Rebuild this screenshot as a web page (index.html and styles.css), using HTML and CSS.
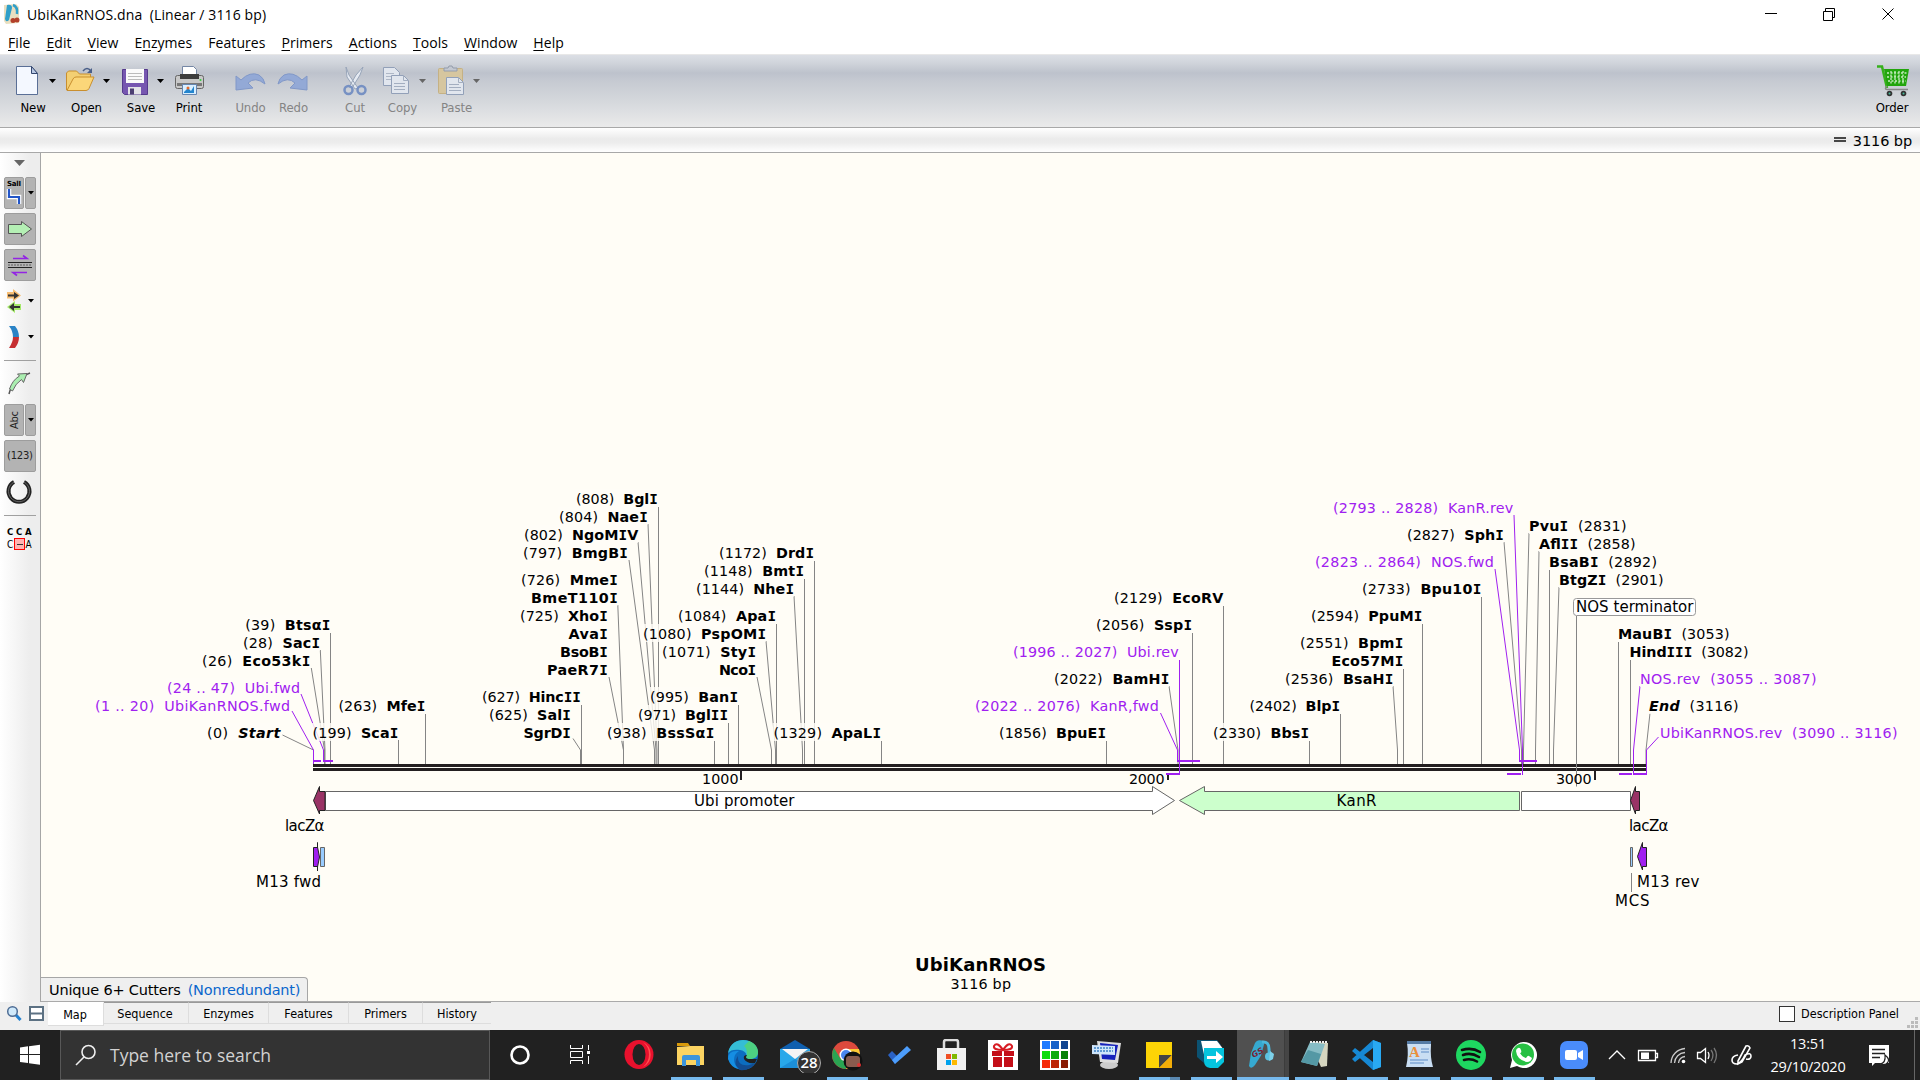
FILE: index.html
```html
<!DOCTYPE html>
<html lang="en">
<head>
<meta charset="utf-8">
<title>UbiKanRNOS.dna (Linear / 3116 bp)</title>
<link rel="stylesheet" href="styles.css">
</head>
<body>
<div class="app">
  <header class="titlebar">
    <svg class="app-icon" width="18" height="22" viewBox="0 0 18 22"><path d="M1 2 13 1l3 3v16l-13 1-2-3z" fill="#e9dfc0"/><path d="M4 2q5-1 5 3L6 17q-3 3-4-1z" fill="#2f9fc9"/><path d="M10 2q5 2 4 9" stroke="#2f9fc9" stroke-width="2.5" fill="none"/><circle cx="10" cy="17.500" r="2.500" fill="#b3402a"/><circle cx="14" cy="17" r="2.500" fill="#b3402a"/></svg>
    <span class="title">UbiKanRNOS.dna&nbsp; (Linear / 3116 bp)</span>
    <svg class="win-controls" width="140" height="20" viewBox="1760 4 140 20" fill="none" stroke="#000"><path d="M1765 13.500h12M1823.500 11.500h9v9h-9zM1825.500 11v-2.500h9v9h-2M1882.500 8.500l11 11M1893.500 8.500l-11 11"/></svg>
  </header>
  <nav class="menubar">
    <span><u>F</u>ile</span><span><u>E</u>dit</span><span><u>V</u>iew</span><span>E<u>n</u>zymes</span><span>Featu<u>r</u>es</span><span><u>P</u>rimers</span><span><u>A</u>ctions</span><span><u>T</u>ools</span><span><u>W</u>indow</span><span><u>H</u>elp</span>
  </nav>
  <div class="toolbar">
    <div class="tool"><svg width="50" height="36" viewBox="8 62 50 36"><path d="M16.500 66.500h15l6 7v21h-21z" fill="#f4f8ff" stroke="#5a6f96"/><path d="M31.500 66.500v7h6z" fill="#b9c9e4" stroke="#33466e"/><path d="M49 79h7l-3.500 4z"/></svg><span>New</span></div>
    <div class="tool"><svg width="57" height="36" viewBox="58 62 57 36"><path d="M66.500 90V73l2-2h8l3 3h11v6" fill="#f3cf73" stroke="#c98f2f"/><path d="M67 90.500 73 79q1-2 3-2h18l-5 11.500q-1 2-3 2z" fill="#fbd679" stroke="#c98f2f"/><path d="M83 71q4-5 8 0" fill="none" stroke="#4a5f88" stroke-width="1.500"/><path d="M92 68v5h-5z" fill="#4a5f88"/><path d="M103 79h7l-3.500 4z"/></svg><span>Open</span></div>
    <div class="tool"><svg width="52" height="36" viewBox="115 62 52 36"><path d="M122.500 69.500h25v25h-23l-2-2z" fill="#7656b0" stroke="#553a8d"/><path d="M126 69h18v14h-18z" fill="#fafafa"/><path d="M128 73.500h14M128 76.500h14M128 79.500h14" stroke="#bbb"/><path d="M128 87h13v7.500h-13z" fill="#e4e4e8"/><path d="M130 88.500h4v6h-4z" fill="#4c3f72"/><path d="M157 79h7l-3.500 4z"/></svg><span>Save</span></div>
    <div class="tool"><svg width="44" height="36" viewBox="167 62 44 36"><path d="M182.500 66.500h11l3 3v8h-14z" fill="#fff" stroke="#7587a5"/><rect x="175.500" y="75.500" width="28" height="13" rx="2" fill="#c8c8c8" stroke="#666"/><path d="M180 74h19v5h-19z" fill="#3d3d3d"/><path d="M177 83h25v3h-25z" fill="#777"/><path d="M182.500 84.500h14v10h-14z" fill="#d9efff" stroke="#6585b0"/><path d="m184 92 4-4 3 3 3-5v7h-10z" fill="#2385ce"/><circle cx="188" cy="88" r="1.500" fill="#e46b2c"/><circle cx="200.500" cy="80" r="1" fill="#2ed13c"/></svg><span>Print</span></div>
    <div class="tool disabled gap-undo"><svg width="41" height="36" viewBox="230 62 41 36"><path d="m236 76 5 4q9-9 18-5 5 3 6 9-10-8-17-1l5 5-17 2z" fill="#93a9d6" stroke="#8198c8"/></svg><span>Undo</span></div>
    <div class="tool disabled gap-redo"><svg width="41" height="36" viewBox="273 62 41 36"><path d="m307 76-5 4q-9-9-18-5-5 3-6 9 10-8 17-1l-5 5 17 2z" fill="#93a9d6" stroke="#8198c8"/></svg><span>Redo</span></div>
    <div class="tool disabled gap-cut"><svg width="40" height="36" viewBox="335 62 40 36"><path d="m346 67 3 8 9 13-3 1-8-12zM363 67l-3 8-8 13-3-1 7-12z" fill="#e5eaf2" stroke="#98a5b9"/><circle cx="348.500" cy="90" r="4" fill="none" stroke="#7791c3" stroke-width="2.500"/><circle cx="361.500" cy="90" r="4" fill="none" stroke="#7791c3" stroke-width="2.500"/></svg><span>Cut</span></div>
    <div class="tool disabled"><svg width="55" height="36" viewBox="375 62 55 36"><path d="M383.500 67.500h11l5 5v13h-16z" fill="#e1e6ee" stroke="#92a0b8"/><path d="M386 73.500h8M386 76.500h8M386 79.500h8" stroke="#aeb7c6"/><path d="M391.500 75.500h12l5 5v13h-17z" fill="#e1e6ee" stroke="#92a0b8"/><path d="M403.500 75.500v5h5M394 83.500h11M394 86.500h11M394 89.500h11" fill="none" stroke="#a3aec0"/><path d="M419 79h7l-3.500 4z" fill="#666"/></svg><span>Copy</span></div>
    <div class="tool disabled"><svg width="53" height="36" viewBox="430 62 53 36"><rect x="438.500" y="68.500" width="24" height="25" rx="1" fill="#d6c69f" stroke="#c5b184"/><path d="M444 71v-3h4l1-2h3l1 2h4v3z" fill="#c3c8d1" stroke="#939cab"/><path d="M446.500 77.500h12l5 5v12h-17z" fill="#e1e6ee" stroke="#92a0b8"/><path d="M458.500 77.500v5h5M449 84.500h10M449 87.500h12M449 90.500h12" fill="none" stroke="#a3aec0"/><path d="M473 79h7l-3.500 4z" fill="#666"/></svg><span>Paste</span></div>
    <div class="tool order"><svg width="40" height="36" viewBox="1872 62 40 36"><path d="M1877 66.500h5l5 21.500" fill="none" stroke="#36b11b" stroke-width="2.500"/><path d="M1884 69h25l-3 17h-19z" fill="#22a50c"/><path d="M1887 73h20M1887 77h19M1888 81h18M1891 71v13M1895 71v13M1899 71v13M1903 71v13" stroke="#c8ecc0" stroke-width="1.300" stroke-dasharray="2 1.500"/><path d="M1887 86q-3 3 0 3.500h21" fill="none" stroke="#888" stroke-width="1.500"/><circle cx="1889.500" cy="93.500" r="2.800" fill="#333"/><circle cx="1903.500" cy="93.500" r="2.800" fill="#333"/><circle cx="1889.500" cy="93.500" r="1" fill="#4b9"/><circle cx="1903.500" cy="93.500" r="1" fill="#4b9"/></svg><span>Order</span></div>
  </div>
  <div class="infobar"><svg width="12" height="6" viewBox="0 0 12 6"><path d="M0 1h12M0 4h12" stroke="#111" stroke-width="1.600"/></svg><span>3116 bp</span></div>
  <main class="workspace">
    <aside class="sidebar">
      <svg width="36" height="16" viewBox="0 0 36 16"><path d="M14 3h11l-5.500 6z" fill="#666"/></svg>
      <svg width="32" height="32" viewBox="4 177 32 32"><rect class="pressed" x="4.500" y="177.500" width="19" height="31" rx="1.500"/><rect class="pressed" x="25.500" y="177.500" width="10" height="31" rx="1.500"/><text class="sal" x="7" y="186" textLength="14">SalI</text><path d="M9 189v8h10v7" stroke="#fff" stroke-width="4.500" fill="none"/><path d="M9 189v8h10v7" stroke="#2356c8" stroke-width="2.200" fill="none"/><path d="M28 191h6l-3 3.500z"/></svg>
      <svg width="32" height="32" viewBox="4 213 32 32"><rect class="pressed" x="4.500" y="213.500" width="31" height="31" rx="1.500"/><path d="M8.500 224.500h13v-3l10 7.500-10 7.500v-3h-13z" fill="#b4efb4" stroke="#555"/></svg>
      <svg width="32" height="32" viewBox="4 249 32 32"><rect class="pressed" x="4.500" y="249.500" width="31" height="31" rx="1.500"/><path d="M8 262.500h24M8 267.500h24" stroke="#222"/><path d="M8 265h24" stroke="#888" stroke-width="2" stroke-dasharray="2 1"/><path d="M13 258.500h14l-4-3M27 272.500H13l4 3" fill="none" stroke="#9324e4" stroke-width="1.600"/></svg>
      <svg width="32" height="32" viewBox="4 285 32 32"><path d="M7 292h6v-3l8 6.500-8 6v-3H7z" fill="#f7bd73"/><path d="M21 304h-6v-3l-8 6 8 6v-3h6z" fill="#a5e96b"/><path d="M8 295.500h8M20 307h-8" stroke="#333" stroke-width="2"/><path d="m14 292 5 3.500-5 3.500zM14 303l-5 4 5 4z" fill="#333"/><path d="M28 299h6l-3 3.500z"/></svg>
      <svg width="32" height="32" viewBox="4 321 32 32"><path d="M9 326h6q4 5 4 11h-6q0-6-4-11z" fill="#2a83c6"/><path d="M19 337q0 6-4 11H9q4-6 4-11z" fill="#c62f32"/><path d="M28 335h6l-3 3.500z"/></svg>
      <div class="rule"></div>
      <svg width="32" height="32" viewBox="4 368 32 32"><path d="M9 394q3-14 21-21" fill="none" stroke="#555" stroke-width="1.500"/><path d="M9.500 389q3-9 10-13l-2-2 9.500-.5-3.500 9-2-3q-6 4-9 11.500z" fill="#aaeeb0" stroke="#666"/></svg>
      <svg width="32" height="32" viewBox="4 404 32 32"><rect class="pressed" x="4.500" y="404.500" width="19" height="31" rx="1.500"/><rect class="pressed" x="25.500" y="404.500" width="10" height="31" rx="1.500"/><text class="small-label" transform="translate(18 429) rotate(-90)" textLength="18">Abc</text><path d="M28 418h6l-3 3.500z"/></svg>
      <svg width="32" height="32" viewBox="4 440 32 32"><rect class="pressed" x="4.500" y="440.500" width="31" height="31" rx="1.500"/><text class="small-label" x="7" y="458.500" textLength="26">(123)</text></svg>
      <svg width="32" height="32" viewBox="4 476 32 32"><path d="M14 482a10.500 10.500 0 1 0 10 0" fill="none" stroke="#222" stroke-width="4"/><path d="M14 482a10.500 10.500 0 1 0 10 0" fill="none" stroke="#777" stroke-width=".8"/></svg>
      <div class="rule"></div>
      <svg width="32" height="32" viewBox="4 521 32 32"><text class="cca bold" x="7" y="532.500">C</text><text class="cca bold" x="16" y="532.500">C</text><text class="cca bold" x="25" y="532.500">A</text><rect x="14.500" y="536.500" width="10" height="11" fill="#ffb3b3" stroke="#f00"/><text class="cca" x="7" y="546">C</text><text class="cca" x="25.500" y="546">A</text><path d="M17 542.500h6" stroke="#333"/></svg>
    </aside>
    <section class="canvas">
      <svg id="map" class="map" width="1879" height="848" viewBox="41 153 1879 848"></svg>
      <div class="cutters"><span class="set">Unique 6+ Cutters</span><span class="mode">(Nonredundant)</span></div>
    </section>
  </main>
  <footer class="viewbar">
    <svg class="view-icons" width="48" height="28" viewBox="0 1002 48 28"><path d="m15.500 1014.500 5 5.500" stroke="#2280d0" stroke-width="3"/><circle cx="12.500" cy="1011.500" r="4.800" fill="#cfe9fb" stroke="#4d6c94" stroke-width="1.500"/><path d="M30 1007h13v13h-13z" fill="#fff" stroke="#5c7183" stroke-width="2"/><path d="M30 1013.500h13" stroke="#5c7183" stroke-width="2"/></svg>
    <div class="tabs"><span class="tab active">Map</span><span class="tab t-seq">Sequence</span><span class="tab t-enz">Enzymes</span><span class="tab t-fea">Features</span><span class="tab t-pri">Primers</span><span class="tab t-his">History</span></div>
    <label class="desc"><i class="box"></i><span>Description Panel</span></label>
    <svg class="grip" width="12" height="12" viewBox="0 0 12 12" fill="#bbb"><path d="M8 0h3v3H8zM4 4h3v3H4zM8 4h3v3H8zM0 8h3v3H0zM4 8h3v3H4zM8 8h3v3H8z"/></svg>
  </footer>
</div>
<div class="taskbar">
  <div class="start"><svg width="22" height="22" viewBox="0 0 22 22" fill="#fff"><path d="m1 3.500 8-1.200V10H1zM10 2.200 21 .7V10H10zM1 11h8v8L1 17.900zM10 11h11v9.700l-11-1.500z"/></svg></div>
  <div class="search"><svg width="22" height="22" viewBox="0 0 22 22" fill="none" stroke="#eee" stroke-width="1.600"><circle cx="13.500" cy="8" r="6.500"/><path d="M9 13 1 21"/></svg><span>Type here to search</span></div>
  <div class="sys"><svg width="32" height="32" viewBox="0 0 32 32"><circle cx="16" cy="16" r="8.500" fill="none" stroke="#fff" stroke-width="2.600"/></svg></div>
  <div class="sys"><svg width="32" height="32" viewBox="0 0 32 32" fill="none" stroke="#fff"><path d="M6.500 6v3.500h12V6M6.500 25v-3.500h12V25M6.500 12.500h12v6h-12zM24.500 6v5M24.500 17v8"/><path d="M23 12h3v3h-3z" fill="#fff" stroke="none"/></svg></div>
  <div class="apps">
    <div class="cell"><svg width="32" height="32" viewBox="0 0 32 32"><ellipse cx="16" cy="15.500" rx="14.500" ry="14.500" fill="#e8112d"/><path d="M20 3a14 14 0 0 1 0 25q6-5 6-12.500T20 3z" fill="#ff5050"/><ellipse cx="16" cy="15.500" rx="6.500" ry="10.500" fill="#222"/></svg></div>
    <div class="cell open"><svg width="32" height="32" viewBox="0 0 32 32"><path d="M2 4h11l2 3H2z" fill="#d99a0b"/><path d="M2 8 15 7h14v19H2z" fill="#fcd462"/><path d="M7 27V18q0-2 2-2h14q2 0 2 2v9h-4v-6H11v6z" fill="#3d95dc"/></svg></div>
    <div class="cell open"><svg width="32" height="32" viewBox="0 0 32 32"><circle cx="16" cy="16" r="15" fill="#0c6dc0"/><path d="M1 14C3 4 10 1 16 1c9 0 15 6 15 12 0 5-4 7-8 7-3 0-4-1-4-2 1-1 1-6-6-7C8 10 3 11 1 14z" fill="#35bdd6"/><path d="M22 2c6 2 9 7 9 11 0 5-4 7-8 7-3 0-4-1-4-2 1-1 2-8-2-11z" fill="#56d764" opacity=".75"/><path d="M11 19c0 6 6 10 17 5-3 5-9 8-15 7-5-3-6-9-2-14z" fill="#124d93"/><path d="M12 12q-5 3-5 9 0 5 5 9-8-1-11-10 0-9 11-8z" fill="#158ee3"/><path d="M19 18q0 2 4 2h7l-2 4q-8 1-11-4-1-4 3-4z" fill="#202020"/></svg></div>
    <div class="cell mail"><svg width="42" height="36" viewBox="0 0 42 36"><path d="M1 12 16 3l15 9v19H1z" fill="#0f5fae"/><path d="M1 12h30v19H1z" fill="#28a8ea"/><path d="M3 12h26L16 22z" fill="#f5f5f5"/><path d="m1 31 15-9 15 9z" fill="#1c8fd8"/><circle cx="30" cy="26" r="11.500" fill="#333" stroke="#aaa"/><text class="badge" x="30" y="31" text-anchor="middle">28</text></svg></div>
    <div class="cell open"><svg width="32" height="32" viewBox="0 0 32 32"><circle cx="15" cy="16" r="14" fill="#dc4a3d"/><path d="M15 30A14 14 0 0 1 3 9l6 10 6 4z" fill="#2aa452"/><path d="M28 10H15l7 9-7 11q14-2 14-15z" fill="#fcc934"/><circle cx="15" cy="16" r="6.500" fill="#fff"/><circle cx="15" cy="16" r="5" fill="#4a86ed"/><circle cx="22" cy="22" r="9.500" fill="#111"/><rect x="15" y="17" width="14" height="11" rx="3" fill="#895b4e"/><circle cx="28" cy="26" r="2" fill="#d33"/></svg></div>
    <div class="cell"><svg width="32" height="32" viewBox="0 0 32 32"><path d="m5 16 4-4 6 6-3 7z" fill="#2a62c5"/><path d="m12 25-3-4L24 7l4 4z" fill="#4c9dfc"/></svg></div>
    <div class="cell"><svg width="32" height="32" viewBox="0 0 32 32"><path d="M9 10V3q0-2 2-2h10q2 0 2 2v7" fill="none" stroke="#ddd" stroke-width="2.500"/><path d="M2 9h29v22H2z" fill="#f1f1f1"/><path d="M11 15h5v5h-5z" fill="#f04e23"/><path d="M17 15h5v5h-5z" fill="#80b900"/><path d="M11 21h5v5h-5z" fill="#00a2ed"/><path d="M17 21h5v5h-5z" fill="#fdb900"/></svg></div>
    <div class="cell"><svg width="32" height="32" viewBox="0 0 32 32"><path d="M1 1h30v30H1z" fill="#fff"/><path d="M5 12h10v5H5zM17 12h10v5H17zM6 18h9v10H6zM17 18h9v10h-9z" fill="#c40e18"/><path d="M16 11q-10 0-9-4 3-5 9 4 6-9 9-4 1 4-9 4z" fill="none" stroke="#d71c24" stroke-width="2"/></svg></div>
    <div class="cell"><svg width="32" height="32" viewBox="0 0 32 32"><path d="M1 1h30v30H1z" fill="#fff"/><path d="M3 2h8v8H3z" fill="#1f7aff"/><path d="M12 2h8v8h-8z" fill="#1560c8"/><path d="M22 2h7v8h-7z" fill="#104490"/><path d="M3 12h8v8H3z" fill="#0bdc0b"/><path d="M12 12h8v8h-8z" fill="#0bab0b"/><path d="M22 12h7v8h-7z" fill="#078007"/><path d="M3 21h8v8H3z" fill="#f52c0a"/><path d="M12 21h8v8h-8z" fill="#bb2406"/><path d="M22 21h7v8h-7z" fill="#8a1b04"/></svg></div>
    <div class="cell"><svg width="32" height="32" viewBox="0 0 32 32"><ellipse cx="18" cy="26" rx="9" ry="4" fill="#ccc"/><path d="m6 2 24 2-3 20-18-1z" fill="#ddd"/><path d="m9 4 18 2-3 15-13-1z" fill="#1621bb"/><path d="m1 6 23 1v9L1 15z" fill="#cfe5fb"/><path d="M3 9h19M3 12h19" stroke="#3d80c4" stroke-width="1.500" stroke-dasharray="2 1"/></svg></div>
    <div class="cell open stacked"><svg width="32" height="32" viewBox="0 0 32 32"><path d="M3 3h26v26H3z" fill="#fdd406"/><path d="M16 16h13L16 29z" fill="#444"/><path d="M29 16v13H16z" fill="#f3ad08"/></svg></div>
    <div class="cell open"><svg width="32" height="32" viewBox="0 0 32 32"><path d="M2 1h20l4 5-17 2v16L2 18z" fill="#0b5272"/><path d="M6 2h16l7 9v9H10z" fill="#fff"/><path d="M9 9h20v14l-6 6H15q-6-1-6-7z" fill="#05c4de"/><path d="M12 17h9v-5l7 6-7 6v-4h-9z" fill="#fff"/></svg></div>
    <div class="cell open current"><svg width="32" height="32" viewBox="0 0 32 32"><path d="M11 1.500q6-1 6 4l-3 11L8 26q-4 5-6 1L4 14 8 4q1-2 3-2.500z" fill="#36a9d0"/><path d="M15 3q7-1 7 7 0 4 1 6" fill="none" stroke="#4bb8dc" stroke-width="3"/><circle cx="22" cy="17.500" r="4" fill="#5cc2e2"/><path d="m23 12 4 3-1 5-4 2z" fill="#7dd1ea"/><text class="gs" transform="translate(6.500 19) rotate(-30)">GS</text></svg></div>
    <div class="cell open"><svg width="32" height="32" viewBox="0 0 32 32"><path d="m11 3 18 1-1 23-6 1z" fill="#d6d6c0"/><path d="m11 3 15 2-8 22-16-4z" fill="#86bcc5"/><path d="m9 11 13 4-4 12-16-4z" fill="#5498a5"/><path d="M11 3h17" stroke="#eee" stroke-dasharray="2 1" stroke-width="2"/></svg></div>
    <div class="cell open"><svg width="32" height="32" viewBox="0 0 32 32"><path d="m22 1 8 3v24l-8 3L1 12l3-3 18 14V9L4 23l-3-3z" fill="#1688d4"/><path d="m22 1 8 3v24l-8 3z" fill="#29a9f2"/></svg></div>
    <div class="cell open"><svg width="32" height="32" viewBox="0 0 32 32"><path d="M4 2h24v4q-1 12 2 22H3q3-12 1-24z" fill="#c9def3"/><path d="M4 2h24v3H4z" fill="#557ba5"/><path d="M18 10h8M18 13h8M7 21h18M7 24h14" stroke="#5c8bc6"/><text class="wp" x="6" y="18">A</text></svg></div>
    <div class="cell open"><svg width="32" height="32" viewBox="0 0 32 32"><circle cx="16" cy="16" r="15" fill="#1ed760"/><path d="M7 11q10-3 18 2M8 16q8-3 16 2M9 21q7-2 13 1.500" fill="none" stroke="#111" stroke-width="2.600" stroke-linecap="round"/></svg></div>
    <div class="cell narrow open"><svg width="32" height="32" viewBox="0 0 32 32"><path d="m3 29 2-8A13 13 0 1 1 10 27z" fill="#fff"/><circle cx="16" cy="15.500" r="11" fill="#27c043"/><path d="M11 9q2-1 3 2t-1 3q2 4 6 5 2-3 3-2l3 2q-1 4-5 4-10-2-11-11 0-2 2-3z" fill="#fff"/></svg></div>
    <div class="cell narrow open"><svg width="32" height="32" viewBox="0 0 32 32"><rect x="2" y="2" width="28" height="28" rx="7" fill="#4a8cfb"/><rect x="7" y="11" width="12" height="10" rx="2" fill="#fff"/><path d="m20 14 5-3v10l-5-3z" fill="#fff"/></svg></div>
  </div>
  <svg class="tray" width="160" height="50" viewBox="1599 1030 160 50" fill="none" stroke="#fff" stroke-width="1.300"><path d="m1609 1059 8-8 8 8"/><path d="M1638.500 1050.500h17v10h-17zM1656 1053.500h1.500v4h-1.500"/><path d="M1641 1052.500h8v6.500h-8z" fill="#fff" stroke="none"/><path d="M1671 1063a15 15 0 0 1 14-14.500M1674.500 1063a11 11 0 0 1 10.500-10.500M1678.500 1063a7.500 7.500 0 0 1 6.500-6.500" stroke="#ccc"/><circle cx="1683.500" cy="1061.500" r="1.800" fill="#fff" stroke="none"/><path d="M1697.500 1052.500h3l5-4v14l-5-4h-3z"/><path d="M1708 1052q2 3 0 7"/><path d="M1711 1050q4 5 0 11M1714 1048q5 7 0 15" stroke="#777"/><path d="m1738 1061 8-15q3-1 4 2l-8 14-4 2zM1738 1055q-6 1-6 5t5 4q5-2 8-9 6-3 6 1t-5 3" stroke-width="1.600"/></svg>
  <div class="clock"><span>13:51</span><span>29/10/2020</span></div>
  <svg class="notif" width="66" height="50" viewBox="1853 1030 66 50"><path d="M1869 1045h20v18h-14l-3 3v-3h-3z" fill="#fff"/><path d="M1872 1049.500h13M1872 1053.500h13M1872 1057.500h8" stroke="#222" stroke-width="1.300"/><path d="M1885 1055q5 4 3 7-2 4-8 2 6-1 5-9z" fill="#fff" stroke="#222" stroke-width="1.200"/><path d="M1914.500 1030v50" stroke="#666"/></svg>
</div>
<script src="map.js"></script>
</body>
</html>
```
FILE: styles.css
```css
* { box-sizing: border-box; }
body { margin: 0; width: 1920px; height: 1080px; overflow: hidden; display: flex; flex-direction: column; background: #fff; color: #000; font-family: "Open Sans", "Noto Sans", sans-serif; }
svg { display: block; flex: none; }
.app { height: 1030px; display: flex; flex-direction: column; }

.titlebar { height: 28px; display: flex; align-items: center; padding: 0 20px 0 3px; }
.title { margin-left: 6px; font-size: 14px; letter-spacing: .12px; white-space: pre; }
.win-controls { margin-left: auto; }
.menubar { height: 26px; display: flex; gap: 16px; padding: 5px 0 0 8px; font-size: 14px; line-height: 19px; letter-spacing: .06px; }
.menubar u { text-underline-offset: 2px; text-decoration-thickness: 1px; }

.toolbar { height: 74px; display: flex; padding: 7px 8px 0; border-top: 1px solid #e8e8e8; border-bottom: 1px solid #a8a8a8; background: linear-gradient(#dcdfe5 0, #d0d4db 8px, #bdc2cc 18px, #c6cad2 26px, #d6d9dd 48px, #ebebeb 73px); }
.tool { display: flex; flex-direction: column; align-items: center; font: 13px/18px "DejaVu Sans Condensed", "Open Sans", sans-serif; }
.tool span { margin-top: 1px; letter-spacing: -.1px; }
.disabled { color: #848484; }
.gap-undo { margin-left: 19px; }
.gap-redo { margin-left: 2px; }
.gap-cut { margin-left: 21px; }
.order { margin-left: auto; }

.infobar { height: 25px; display: flex; justify-content: flex-end; align-items: center; gap: 7px; padding: 2px 8px 0 0; border-bottom: 1px solid #a8a8a8; background: linear-gradient(#fff, #ebebeb 45%, #ececec 60%, #fff); font: 14.5px/22px "DejaVu Sans", sans-serif; letter-spacing: -.1px; }
.infobar svg { margin-bottom: 2px; }

.workspace { height: 849px; display: flex; }
.sidebar { width: 41px; display: flex; flex-direction: column; align-items: flex-start; gap: 4px; padding: 4px 0 0 4px; border-right: 1px solid #a6a6a6; background: linear-gradient(90deg, #fff, #ededed 75%); }
.sidebar > svg:first-child { margin-left: -4px; }
.rule { width: 32px; height: 1px; margin: 3px 0; background: #a0a0a0; }
.pressed { fill: #b3b3b3; stroke: #9d9d9d; }
.sal { font: bold 7px "DejaVu Sans", sans-serif; }
.small-label { font: 10px "DejaVu Sans", sans-serif; fill: #222; }
.cca { font: 10px "DejaVu Sans Condensed", "DejaVu Sans", sans-serif; }
.cca.bold { font-weight: bold; font-size: 9.5px; }

.canvas { position: relative; flex: 1; background: #fffdf6; border-bottom: 1px solid #aaa; }
.cutters { position: absolute; left: 0; bottom: 0; width: 267px; height: 24px; display: flex; align-items: center; gap: 7px; padding: 1px 0 0 8px; border: 1px solid #a6a6a6; border-width: 1px 1px 0 0; border-radius: 0 4px 0 0; background: #efefef; font: 14.5px/20px "DejaVu Sans", sans-serif; letter-spacing: -.19px; white-space: nowrap; }
.mode { color: #0a66cc; }

.lead { fill: none; stroke: #858585; stroke-width: 1; }
.lead.primer { stroke: #a020f0; }
.site { stroke: #a020f0; stroke-width: 2; }
.strand { fill: #231f20; }
.tick { stroke: #231f20; stroke-width: 2; }
.mask { fill: #fffdf6; opacity: .82; }
.lbl { font: 14.3px "DejaVu Sans", sans-serif; fill: #000; }
.lbl .name { font-weight: bold; }
.lbl .end { font-style: italic; }
.lbl .slab { font-family: "DejaVu Sans Mono", monospace; }
.lbl.primer { fill: #a020f0; }
.lbl.feature { font-size: 15px; }
.lbl.heading { font-size: 18px; font-weight: bold; }
.callout { fill: #fff; stroke: #999; }
.shape { stroke: #666; }
.shape.dark { stroke: #222; }
.white { fill: #fff; }
.green { fill: #cfc; }
.plum { fill: #936; }
.violet { fill: #a020f0; }
.sky { fill: #99ccff; }

.viewbar { height: 28px; display: flex; align-items: flex-start; background: #efefef; font: 12.5px/16px "DejaVu Sans Condensed", "Open Sans", sans-serif; }
.tabs { display: flex; }
.tab { height: 22px; padding-top: 3px; text-align: center; border: solid #ddd; border-width: 0 1px 1px 0; border-top: 1px solid #999; }
.tab.active { width: 56px; height: 24px; padding: 4px 1px 0 0; background: #fff; border-color: #fff #ddd #ddd #fff; }
.t-seq { width: 85px; padding-right: 2px; } .t-enz { width: 80px; } .t-fea { width: 80px; } .t-pri { width: 74px; } .t-his { width: 68px; border-right: 0; }
.desc { margin: 4px 0 0 auto; display: flex; align-items: center; gap: 6px; height: 16px; }
.box { width: 16px; height: 16px; border: 1px solid #333; background: #fff; }
.grip { margin: 15px 1px 0 8px; }

.taskbar { height: 50px; display: flex; background: #212121; color: #fff; }
.start { width: 60px; display: flex; align-items: center; justify-content: center; }
.search { width: 430px; display: flex; align-items: center; gap: 13px; padding-left: 14px; border: 1px solid #585858; background: #333; color: #d2d2d2; font-size: 17.500px; }
.sys { width: 60px; display: flex; align-items: center; justify-content: center; }
.apps { display: flex; padding-left: 3px; }
.cell { position: relative; width: 52px; display: flex; align-items: center; justify-content: center; }
.cell.narrow { width: 51px; }
.cell.open::after { content: ""; position: absolute; left: 5.500px; bottom: 0; width: 41px; height: 3px; background: #76b9ed; }
.cell.stacked::after { background: linear-gradient(90deg, #76b9ed 75%, #5a88b0 75%); }
.cell.current { background: linear-gradient(90deg, #505050 47px, #333 47px, #454545 48px); }
.cell.current::after { left: 0; width: 52px; }
.cell.mail svg { margin-left: 9px; }
.badge { font: 600 15px "Open Sans", sans-serif; fill: #fff; }
.gs { font: italic bold 8px "DejaVu Sans", sans-serif; fill: #7a2030; }
.wp { font: bold 15px "Liberation Serif", serif; fill: #e98f3c; }
.clock { width: 90px; padding-top: 2px; margin-left: 4px; display: flex; flex-direction: column; align-items: center; font-size: 14.500px; line-height: 23px; letter-spacing: -.2px; }
```
FILE: map.js
```js
const NS = "http://www.w3.org/2000/svg";
const map = document.getElementById("map");

function add(tag, attrs, text, parent = map) {
  const el = document.createElementNS(NS, tag);
  for (const k in attrs) el.setAttribute(k, attrs[k]);
  if (text) el.textContent = text;
  parent.appendChild(el);
  return el;
}

/* Leader lines: [x, y] is a straight drop, [x, y, x2, end] bends at y = 750. */
const leads = [
  [330.5, 633], [320.3, 650, 325], [311.3, 668, 324.5], [282.5, 735, 313.5], [398.5, 740], [425.5, 714],
  [658.5, 507], [648, 524, 657], [638, 542, 656], [629, 560, 654.5], [617.8, 605, 623.5], [609, 677, 623.5],
  [581.5, 705], [573, 738.5, 580.5], [714.5, 741], [728.5, 723], [738.5, 705], [757, 677, 771.5],
  [766, 641, 775.5], [776.5, 624], [794, 596, 802.5], [804.5, 579], [814.5, 561], [881.5, 741],
  [1223.5, 606], [1192.5, 633], [1169, 686, 1178], [1106.5, 741], [1309.5, 741], [1340.5, 714],
  [1393, 686, 1397.5], [1403.5, 669], [1422.5, 624], [1481.5, 597], [1504, 542, 1521.5], [1529, 533, 1523.5],
  [1539, 551, 1535.5], [1549.5, 570], [1559, 587, 1553.5], [1618.5, 642], [1630.5, 660], [1650, 713, 1646]
];
const primerLeads = [
  [301, 694, 323.5, 761], [292, 711, 313.5, 764], [1179.5, 660, 1179.5, 774], [1160.5, 713, 1177.5, 761],
  [1495, 569, 1519.5, 761], [1514, 515, 1522.5, 775], [1640, 686, 1633.5, 774], [1658.5, 737, 1646.5, 774]
];
const sites = [
  [313, 321, 761], [323, 333, 761], [1177, 1200, 761], [1166, 1180, 774], [1519, 1537, 761],
  [1507, 1521, 774], [1619, 1632, 774], [1633, 1647, 774]
];

/* Labels: [left, right, baseline, position, name]; primers carry a sixth value. */
const before = [
  [245.3, 330, 630, "(39)", "BtsαI"], [243, 319.7, 648, "(28)", "SacI"], [202, 310, 666, "(26)", "Eco53kI"],
  [167, 299.7, 693, "(24 .. 47)", "Ubi.fwd", 1], [95, 289.7, 711, "(1 .. 20)", "UbiKanRNOS.fwd", 1],
  [207, 280, 738, "(0)", "Start"], [312.5, 398, 738, "(199)", "ScaI"], [338.5, 425, 711, "(263)", "MfeI"],
  [576, 657.5, 504, "(808)", "BglI"], [559, 647.5, 522, "(804)", "NaeI"], [524, 638, 540, "(802)", "NgoMIV"],
  [523, 627.5, 558, "(797)", "BmgBI"], [521, 617.5, 585, "(726)", "MmeI"], [531, 617.5, 603, "", "BmeT110I"],
  [520, 607.5, 621, "(725)", "XhoI"], [568.5, 607.5, 639, "", "AvaI"], [560, 607.5, 657, "", "BsoBI"],
  [547, 607.5, 675, "", "PaeR7I"], [482, 580.5, 702, "(627)", "HincII"], [489, 570.5, 720, "(625)", "SalI"],
  [523.5, 570.5, 738, "", "SgrDI"], [607, 714, 738, "(938)", "BssSαI"], [638, 727.7, 720, "(971)", "BglII"],
  [650, 737.7, 702, "(995)", "BanI"], [719, 755.7, 675, "", "NcoI"], [662, 755.7, 657, "(1071)", "StyI"],
  [643, 765.7, 639, "(1080)", "PspOMI"], [678, 775.7, 621, "(1084)", "ApaI"], [696, 793.7, 594, "(1144)", "NheI"],
  [704, 803.7, 576, "(1148)", "BmtI"], [719, 813.7, 558, "(1172)", "DrdI"], [773.5, 880.7, 738, "(1329)", "ApaLI"],
  [1114, 1223, 603, "(2129)", "EcoRV"], [1096, 1191.7, 630, "(2056)", "SspI"],
  [1013, 1178.5, 657, "(1996 .. 2027)", "Ubi.rev", 1], [1054, 1169, 684, "(2022)", "BamHI"],
  [975, 1158.5, 711, "(2022 .. 2076)", "KanR,fwd", 1], [999, 1105.7, 738, "(1856)", "BpuEI"],
  [1213, 1308.7, 738, "(2330)", "BbsI"], [1249.5, 1339.7, 711, "(2402)", "BlpI"], [1285, 1393, 684, "(2536)", "BsaHI"],
  [1331.5, 1403, 666, "", "Eco57MI"], [1300, 1403, 648, "(2551)", "BpmI"], [1311, 1422, 621, "(2594)", "PpuMI"],
  [1362, 1481, 594, "(2733)", "Bpu10I"], [1315, 1493.5, 567, "(2823 .. 2864)", "NOS.fwd", 1],
  [1407, 1503.5, 540, "(2827)", "SphI"], [1333, 1513, 513, "(2793 .. 2828)", "KanR.rev", 1]
];
const after = [
  [1530, 1625.5, 531, "(2831)", "PvuI"], [1540, 1634.5, 549, "(2858)", "AflII"], [1550, 1656, 567, "(2892)", "BsaBI"],
  [1560, 1662.5, 585, "(2901)", "BtgZI"], [1619, 1728.5, 639, "(3053)", "MauBI"], [1630.5, 1747.5, 657, "(3082)", "HindIII"],
  [1641, 1815.5, 684, "(3055 .. 3087)", "NOS.rev", 1], [1650, 1737.5, 711, "(3116)", "End"],
  [1661, 1896.5, 738, "(3090 .. 3116)", "UbiKanRNOS.rev", 1]
];
/* Plain texts: [left, right, baseline, text, class]. */
const plain = [
  [703, 737.5, 784, "1000", ""], [1130, 1163.5, 784, "2000", ""], [1557, 1590.5, 784, "3000", ""],
  [695, 793.5, 806, "Ubi promoter", "feature"], [1337.5, 1375.5, 806, "KanR", "feature"],
  [286, 323.5, 831, "lacZα", "feature"], [1630, 1667.5, 831, "lacZα", "feature"],
  [257, 320, 887, "M13 fwd", "feature"], [1638, 1698.5, 887, "M13 rev", "feature"], [1616, 1648.5, 906, "MCS", "feature"],
  [1577, 1692.5, 612, "NOS terminator", "feature"],
  [916, 1045, 970.5, "UbiKanRNOS", "heading"], [951.5, 1010, 989, "3116 bp", ""]
];

function bend([x, y, x2, end = 764], cls) {
  add("path", { class: cls, d: x2 ? `M${x} ${y}L${x2} 750V${end}` : `M${x} ${y}V${end}` });
}
leads.forEach(l => bend(l, "lead"));
primerLeads.forEach(l => bend(l, "lead primer"));

add("path", { class: "strand", d: "M313 764h1334v3H313zM313 768h1334v3H313z" });
[[741, 771], [1168, 775], [1595, 771]].forEach(([x, y]) => add("path", { class: "tick", d: `M${x} ${y}V780` }));
sites.forEach(([a, b, y]) => add("path", { class: "site", d: `M${a} ${y}H${b}` }));
add("path", { class: "lead primer", d: "M1179.5 762V775M1522.5 762V775M1633.5 752V774M1646.5 752V774" });

/* Features */
const shapes = [
  ["white", "M325.5 791.500H1152.500V786.500L1174.500 800.500L1152.500 814.500V810.500H325.500Z"],
  ["green", "M1519.500 791.500H1204.500V786.500L1179.500 800.500L1204.500 814.500V810.500H1519.500Z"],
  ["white", "M1521.500 791.500H1630.500V810.500H1521.500Z"],
  ["plum dark", "M325 791.500H319.500V786.500L313.500 800.500L319.500 814V810.500H325Z"],
  ["plum dark", "M1639.500 791.500H1635.500V786.500L1630.500 800.500L1635.500 814V810.500H1639.500Z"],
  ["violet dark", "M313.500 847.500H317.500V842.500V847L319.500 857L317.500 867V871V866.500H313.500Z"],
  ["sky", "M320.500 847.500H324.500V866.500H320.500Z"],
  ["sky", "M1630.500 847.500H1632.500V866.500H1630.500Z"],
  ["violet dark", "M1646.500 847.500H1642.500V842.500L1637.500 856.500L1642.500 870V866.500H1646.500Z"]
];
shapes.forEach(([c, d]) => add("path", { class: "shape " + c, d }));
add("path", { class: "lead", d: "M1631.500 873V892M1576.500 616V786.500" });
add("rect", { class: "callout", x: 1573.5, y: 598.5, width: 122, height: 17, rx: 3 });

/* Capital I is set with slab serifs in the enzyme names. */
function nameInto(text, name, primer) {
  if (primer) { add("tspan", {}, name, text); return; }
  const cls = name === "Start" || name === "End" ? "name end" : "name";
  const box = add("tspan", { class: cls }, "", text);
  name.split(/(I+)/).filter(Boolean).forEach(p => {
    if (p[0] === "I") add("tspan", { class: "slab" }, p, box);
    else box.appendChild(document.createTextNode(p));
  });
}
function label([l, r, y, pos, name, primer], posFirst) {
  add("rect", { class: "mask", x: l - 1, y: y - 15, width: r - l + 1, height: 18 });
  const x = posFirst ? l : l - 1;
  const t = add("text", { class: "lbl" + (primer ? " primer" : ""), x, y, textLength: posFirst ? r - l + 0.3 : r - l + 2 });
  if (posFirst) {
    if (pos) t.appendChild(document.createTextNode(pos + "\u00a0\u00a0"));
    nameInto(t, name, primer);
  } else {
    nameInto(t, name, primer);
    t.appendChild(document.createTextNode("\u00a0\u00a0" + pos));
  }
}
before.forEach(l => label(l, true));
after.forEach(l => label(l, false));
plain.forEach(([l, r, y, s, c]) => add("text", { class: "lbl " + c, x: l - 1, y, textLength: r - l + 2 }, s));
```
